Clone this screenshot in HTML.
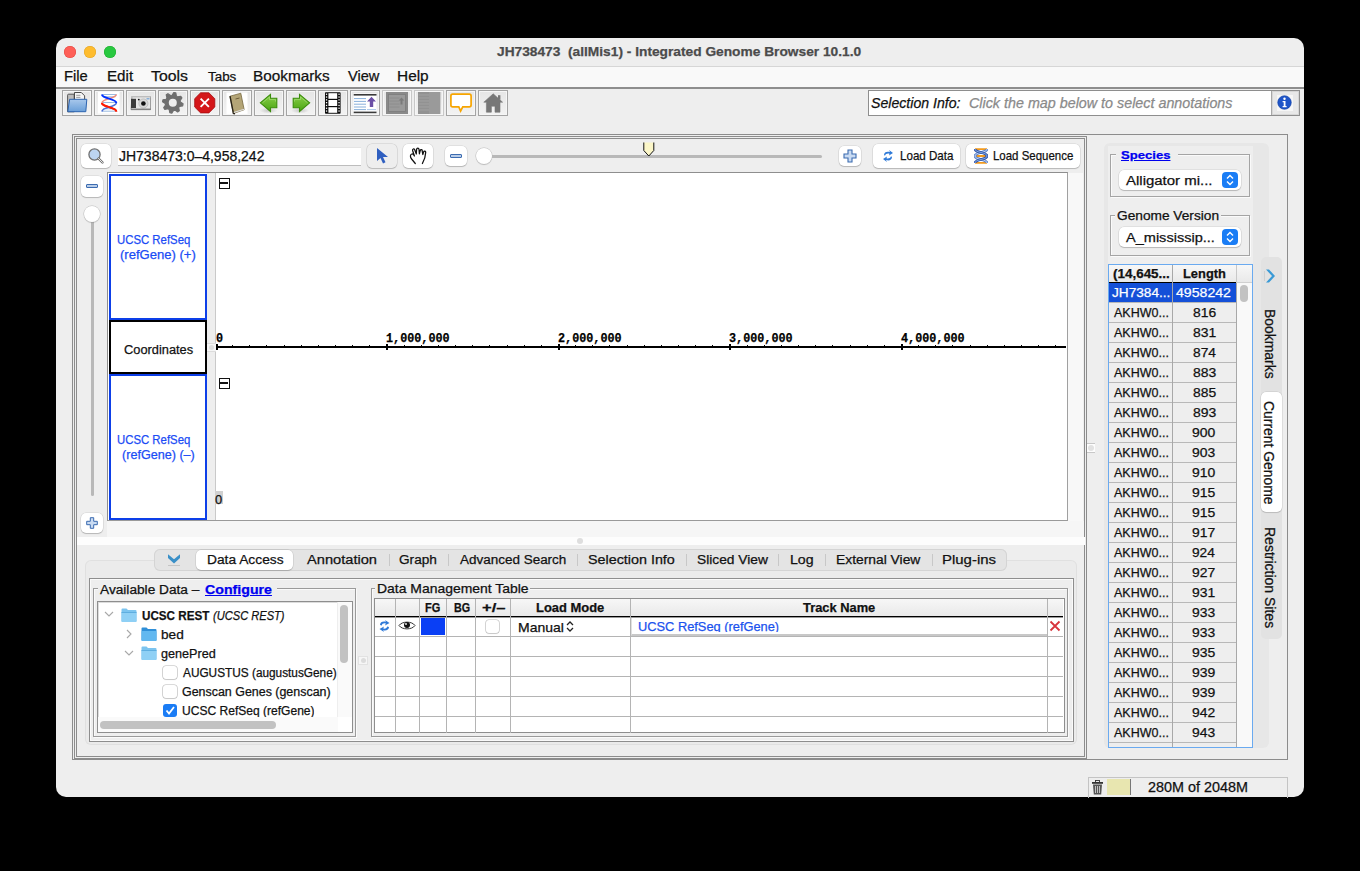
<!DOCTYPE html>
<html><head><meta charset="utf-8">
<style>
*{box-sizing:border-box;margin:0;padding:0}
html,body{width:1360px;height:871px;overflow:hidden;background:#000}
body{font-family:"Liberation Sans",sans-serif;font-size:13px;color:#000;position:relative}
.a{position:absolute}
.t{position:absolute;white-space:nowrap;line-height:1;-webkit-text-stroke:0.25px currentColor}
#win{position:absolute;left:56px;top:38px;width:1248px;height:759px;background:#eeeeee;border-radius:10px;overflow:hidden}
.dot{position:absolute;top:46px;width:12px;height:12px;border-radius:50%}
.tb{position:absolute;top:90px;width:30px;height:26px;border:1px solid #a4a4a4;background:linear-gradient(#e6e6e6,#f3f3f3);box-shadow:inset 0 0 0 1px #f6f6f6}
.tb svg{position:absolute;left:3px;top:2px}
.bx{position:absolute;border:1px solid #8c8c8c}
.btnw{position:absolute;background:#fff;border-radius:5px;box-shadow:0 0 0 0.5px rgba(0,0,0,0.12),0 1px 1px rgba(0,0,0,0.18)}
.mono{font-family:"Liberation Mono",monospace;font-weight:bold}
.blue{color:#1a52e0}
.link{color:#0000ee;text-decoration:underline;font-weight:bold}
</style></head><body>
<div id="win"></div>
<!-- title bar -->
<div class="a" style="left:56px;top:66px;width:1248px;height:1px;background:#d6d6d6"></div>
<div class="dot" style="left:64px;background:#fe5f57;box-shadow:inset 0 0 0 0.5px #e2463f"></div>
<div class="dot" style="left:84px;background:#febc2e;box-shadow:inset 0 0 0 0.5px #e1a325"></div>
<div class="dot" style="left:104px;background:#28c840;box-shadow:inset 0 0 0 0.5px #1aab29"></div>
<!-- menu bar -->
<div class="a" style="left:56px;top:67px;width:1248px;height:20px;background:#f9f9f9"></div>
<div class="a" style="left:56px;top:87px;width:1248px;height:2px;background:#8e8e8e"></div>
<!-- toolbar -->
<div class="tb" style="left:62px"></div>
<div class="tb" style="left:94px"></div>
<div class="tb" style="left:126px"></div>
<div class="tb" style="left:158px"></div>
<div class="tb" style="left:190px"></div>
<div class="tb" style="left:222px"></div>
<div class="tb" style="left:254px"></div>
<div class="tb" style="left:286px"></div>
<div class="tb" style="left:318px"></div>
<div class="tb" style="left:350px"></div>
<div class="tb" style="left:382px;border-color:#c8c8c8"></div>
<div class="tb" style="left:414px;border-color:#c8c8c8"></div>
<div class="tb" style="left:446px"></div>
<div class="tb" style="left:478px"></div>
<svg class="a" style="left:60px;top:88px" width="452" height="30" viewBox="60 88 452 30">
<defs>
<linearGradient id="gfold" x1="0" y1="0" x2="0" y2="1"><stop offset="0" stop-color="#a9c8ec"/><stop offset="1" stop-color="#6a9fd8"/></linearGradient>
<linearGradient id="garr" x1="0" y1="0" x2="0" y2="1"><stop offset="0" stop-color="#8ad04a"/><stop offset="1" stop-color="#4aa512"/></linearGradient>
<radialGradient id="gshadow"><stop offset="0" stop-color="#000" stop-opacity="0.18"/><stop offset="1" stop-color="#000" stop-opacity="0"/></radialGradient>
</defs>
<!-- open -->
<path d="M67.6 95.2a1 1 0 0 1 1-1h5.6v17.6h-6.6z" fill="#bdbdbd" stroke="#4a4a4a" stroke-width="0.9"/>
<path d="M74.5 92.5h6.8l3.3 3.3v8h-10.1z" fill="#f6f6f6" stroke="#3c3c3c" stroke-width="0.9"/>
<path d="M76.2 95.3h4.2M76.2 97.4h4.2" stroke="#888" stroke-width="0.8"/>
<path d="M69.6 99.3h17.2l-1 12.4H67.8z" fill="url(#gfold)" stroke="#2d64b0" stroke-width="1"/>
<!-- dna -->
<rect x="98" y="92" width="21.5" height="21.5" fill="#fff"/>
<path d="M102 94.5h14.5M103 96.8h12.5M102.5 102.5h13M103 108.8h12.5M102 111.2h14.5" stroke="#8fb2dc" stroke-width="0.9"/>
<path d="M116.3 94.4C116.3 98.6 102 98.6 102 102.9" fill="none" stroke="#ef8a7a" stroke-width="1.6"/>
<path d="M102 102.9C102 107.1 116.3 107.1 116.3 111.4" fill="none" stroke="#fe1a00" stroke-width="2"/>
<path d="M116.3 102.9C116.3 107.1 102 107.1 102 111.4" fill="none" stroke="#4a6fd6" stroke-width="1.6"/>
<path d="M102 94.4C102 98.6 116.3 98.6 116.3 102.9" fill="none" stroke="#0030fe" stroke-width="2"/>
<path d="M102 102.9C102 107.1 116.3 107.1 116.3 111.4" fill="none" stroke="#fe1a00" stroke-width="2"/>
<!-- camera -->
<path d="M132 96.5h18.5v13.2H131z" fill="#e6e6e6" stroke="#8a8a8a" stroke-width="0.8"/>
<rect x="131.2" y="96" width="19.5" height="1.4" fill="#bdbdbd"/>
<rect x="131" y="98.8" width="5" height="9.2" fill="#3a3a3a"/>
<circle cx="143.4" cy="103.5" r="4.6" fill="#d8d8d8" stroke="#aaa" stroke-width="0.6"/>
<circle cx="143.4" cy="103.5" r="2.3" fill="#111"/>
<circle cx="138.8" cy="99.6" r="0.9" fill="#111"/>
<rect x="146.5" y="98" width="3" height="1.5" fill="#8ab0d8"/>
<rect x="131" y="108.6" width="19.8" height="1.2" fill="#777"/>
<!-- gear -->
<path d="M172.06 95.24 L173.81 92.55 L175.79 92.94 L176.38 96.10 L177.62 96.93 L180.76 96.27 L181.88 97.94 L180.07 100.59 L180.36 102.06 L183.05 103.81 L182.66 105.79 L179.50 106.38 L178.67 107.62 L179.33 110.76 L177.66 111.88 L175.01 110.07 L173.54 110.36 L171.79 113.05 L169.81 112.66 L169.22 109.50 L167.98 108.67 L164.84 109.33 L163.72 107.66 L165.53 105.01 L165.24 103.54 L162.55 101.79 L162.94 99.81 L166.10 99.22 L166.93 97.98 L166.27 94.84 L167.94 93.72 L170.59 95.53Z" fill="#6f6f6f" stroke="#6f6f6f" stroke-width="1.2" stroke-linejoin="round"/>
<circle cx="172.8" cy="102.8" r="4" fill="#eeeeee"/>
<!-- stop -->
<path d="M200.6 92.8h8.3l5.9 5.9v8.3l-5.9 5.9h-8.3l-5.9-5.9v-8.3z" fill="#d4171a" stroke="#a40d10" stroke-width="0.8"/>
<path d="M200.6 98.6l8.3 8.3M208.9 98.6l-8.3 8.3" stroke="#fff" stroke-width="1.9"/>
<!-- book -->
<rect x="226.5" y="92.5" width="21" height="21.4" fill="#fff"/>
<path d="M230 96.2l10.8-3 3.4 16.5-10.8 3.8z" fill="#b4a577" stroke="#6a5a30" stroke-width="0.7"/>
<path d="M230 96.2l3.4 17.3l1.6 0.3" fill="none" stroke="#2a2418" stroke-width="1.4"/>
<path d="M233.8 112.5l10.4-3.2" stroke="#e0e0e0" stroke-width="1.2"/>
<path d="M235.5 99l4-1" stroke="#5a4a2a" stroke-width="0.8"/>
<!-- left arrow -->
<ellipse cx="268.5" cy="110.5" rx="9" ry="3" fill="url(#gshadow)"/>
<path d="M260.3 102.8l10.2-8.5v4h6.3v9.4h-6.3v3.8z" fill="url(#garr)" stroke="#3b8c0c" stroke-width="1.1" stroke-linejoin="miter"/>
<path d="M262.5 102.8l7-5.8v2.6h6v2" fill="none" stroke="#b8e890" stroke-width="0.7" opacity="0.7"/>
<!-- right arrow -->
<ellipse cx="300" cy="110.5" rx="9" ry="3" fill="url(#gshadow)"/>
<path d="M309.7 102.8l-10.2-8.5v4h-6.3v9.4h6.3v3.8z" fill="url(#garr)" stroke="#3b8c0c" stroke-width="1.1" stroke-linejoin="miter"/>
<path d="M307.5 102.8l-7-5.8v2.6h-6v2" fill="none" stroke="#b8e890" stroke-width="0.7" opacity="0.7"/>
<!-- film -->
<rect x="325" y="92.2" width="15.6" height="21.6" fill="#0c0c0c" rx="0.8"/>
<rect x="328.4" y="93.2" width="8.8" height="5.6" fill="#fff"/>
<rect x="328.4" y="100" width="8.8" height="6" fill="#fff"/>
<rect x="328.4" y="107.2" width="8.8" height="5.6" fill="#fff"/>
<g fill="#fff"><rect x="325.9" y="93.6" width="1.3" height="1.3"/><rect x="338.4" y="93.6" width="1.3" height="1.3"/><rect x="325.9" y="96.4" width="1.3" height="1.3"/><rect x="338.4" y="96.4" width="1.3" height="1.3"/><rect x="325.9" y="99.2" width="1.3" height="1.3"/><rect x="338.4" y="99.2" width="1.3" height="1.3"/><rect x="325.9" y="102" width="1.3" height="1.3"/><rect x="338.4" y="102" width="1.3" height="1.3"/><rect x="325.9" y="104.8" width="1.3" height="1.3"/><rect x="338.4" y="104.8" width="1.3" height="1.3"/><rect x="325.9" y="107.6" width="1.3" height="1.3"/><rect x="338.4" y="107.6" width="1.3" height="1.3"/><rect x="325.9" y="110.4" width="1.3" height="1.3"/><rect x="338.4" y="110.4" width="1.3" height="1.3"/></g>
<!-- upload list -->
<rect x="353.5" y="93.5" width="23" height="20" fill="#fff"/>
<rect x="353.7" y="94" width="22.8" height="1.6" fill="#3a3a3a"/>
<rect x="353.7" y="111.6" width="22.8" height="1.6" fill="#3a3a3a"/>
<path d="M354 98.6h12M354 101.4h12M354 104.2h12M354 107h12M354 109.6h12" stroke="#7aa6d6" stroke-width="0.9"/>
<path d="M371.5 96.8l-4.5 4.8h2.8v5.4h3.4v-5.4H376z" fill="#6b4fa6"/>
<path d="M367 109.6h9" stroke="#9ec0e6" stroke-width="0.9"/>
<!-- gray 1 -->
<rect x="386" y="92" width="22" height="22" fill="#8a8a8a"/>
<rect x="388.5" y="94.5" width="17" height="17" fill="#9a9a9a" stroke="#7c7c7c" stroke-width="0.8"/>
<path d="M389.5 98h10M389.5 101h10M389.5 104h10M389.5 107h10" stroke="#8a8a8a" stroke-width="0.8"/>
<path d="M401.5 97.5l-2.8 3h1.8v4h2v-4h1.8z" fill="#7a7a7a"/>
<!-- gray 2 -->
<rect x="418" y="92" width="22.2" height="22" fill="#929292"/>
<rect x="429" y="92" width="11.2" height="22" fill="#9a9a9a"/>
<path d="M418.5 95h10.5M418.5 98h10.5M418.5 101h10.5M418.5 104h10.5M418.5 107h10.5M418.5 110h10.5" stroke="#a6a6a6" stroke-width="0.8"/>
<!-- speech bubble -->
<path d="M452.7 94.2h16.6a1.8 1.8 0 0 1 1.8 1.8v9a1.8 1.8 0 0 1-1.8 1.8h-6.5l-2.2 4.2-1.8-4.2h-6.1a1.8 1.8 0 0 1-1.8-1.8v-9a1.8 1.8 0 0 1 1.8-1.8z" fill="#fff" stroke="#f7a500" stroke-width="1.7"/>
<!-- home -->
<path d="M493.2 93.8l-9.4 8.4h2.6v10h5v-6h3.6v6h5v-10h2.6z" fill="#777" stroke="#777" stroke-width="0.6" stroke-linejoin="round"/>
<rect x="498" y="95.2" width="2.4" height="4.5" fill="#777"/>
</svg>
<!-- selection info -->
<div class="a" style="left:868px;top:90px;width:432px;height:26px;background:#fff;border:1px solid #8e8e8e"></div>
<div class="a" style="left:1271px;top:91px;width:28px;height:24px;background:#e8e8e8;border-left:1px solid #a8a8a8;box-shadow:inset 0 0 0 1px #d6d6d6"></div>
<div class="a" style="left:1277px;top:95px;width:16px;height:16px;background:#f6f6f6"></div>
<svg class="a" style="left:1277px;top:95px" width="15" height="15" viewBox="0 0 15 15"><circle cx="7.5" cy="7.5" r="6.8" fill="#1f55c8"/><circle cx="7.5" cy="7.5" r="6.8" fill="none" stroke="#0c3aa0" stroke-width="0.6"/><circle cx="7.5" cy="3.8" r="1.2" fill="#fff"/><path d="M5.6 6h2.9v5h1.1v1.2H5.6V11h1.1V7.2H5.6z" fill="#fff"/></svg>

<!-- BODY -->
<!-- main outer borders -->
<div class="bx" style="left:72px;top:134px;width:1216px;height:626px"></div>
<div class="bx" style="left:74px;top:136px;width:1013px;height:623px"></div>
<div class="bx" style="left:76px;top:138px;width:1009px;height:619px"></div>
<!-- search toolbar -->
<div class="btnw" style="left:81px;top:144px;width:30px;height:24px"></div>
<svg class="a" style="left:87px;top:147px" width="18" height="18" viewBox="0 0 18 18"><circle cx="7.5" cy="7.5" r="5.6" fill="#bcd4f0" stroke="#707070" stroke-width="1.3"/><path d="M11.5 11.5l4 4" stroke="#707070" stroke-width="2.4" stroke-linecap="round"/><path d="M11.5 11.5l4 4" stroke="#e8e8e8" stroke-width="1" stroke-linecap="round"/></svg>
<div class="a" style="left:118px;top:147px;width:243px;height:19px;background:#fff;box-shadow:inset 0 -1px 0 #bdbdbd,inset 0 1px 0 #e4e4e4"></div>
<div class="a" style="left:367px;top:144px;width:30px;height:24px;background:#eeeeee;border-radius:5px;box-shadow:0 0 0 0.5px rgba(0,0,0,0.15),0 1px 1px rgba(0,0,0,0.15)"></div>
<svg class="a" style="left:375px;top:147px" width="14" height="18" viewBox="0 0 14 18"><path d="M2 1v13l3.5-3 2.5 5.5 2.5-1.2-2.5-5.3H13z" fill="#2f5fc0"/></svg>
<div class="btnw" style="left:403px;top:144px;width:30px;height:24px"></div>
<svg class="a" style="left:400px;top:140px" width="32" height="30" viewBox="400 140 32 30"><path d="M415.3 163.5L411.6 159C410 157 410 154.5 411.8 154C413 153.8 414 155 414.4 156L412.6 150.5C412.2 149 414 148.3 414.6 149.5L416.3 154L416.6 149.3C416.8 147.8 418.8 147.8 419 149.3L419.4 153.8L420.2 150.5C420.6 149.2 422.4 149.4 422.2 150.8L422.8 154.5L423.6 152C424 150.8 425.8 151 425.7 152.5C425.6 156 424.5 159.5 422.4 163.5" fill="#fff" stroke="#111" stroke-width="1.25" stroke-linecap="round" stroke-linejoin="round"/></svg>
<div class="btnw" style="left:445px;top:146px;width:22px;height:20px"></div>
<div class="a" style="left:450px;top:154px;width:12px;height:4px;background:#b9cde8;border:1px solid #3b6bb0;border-radius:1px"></div>
<div class="a" style="left:484px;top:155px;width:338px;height:3px;background:#b8b8b8;border-radius:2px"></div>
<div class="a" style="left:476px;top:148px;width:16px;height:16px;border-radius:50%;background:#fff;box-shadow:0 0 0 0.5px #bdbdbd,0 1px 1px rgba(0,0,0,0.2)"></div>
<svg class="a" style="left:643px;top:141.5px" width="12" height="15" viewBox="0 0 12 15"><path d="M0.8 0.5V8.5l5 5.5 5-5.5V0.5" fill="#fbf6c8" stroke="#111" stroke-width="1"/></svg>
<div class="btnw" style="left:839px;top:146px;width:22px;height:20px"></div>
<svg class="a" style="left:843px;top:149px" width="14" height="14" viewBox="0 0 14 14"><path d="M5 1h4v4h4v4H9v4H5V9H1V5h4z" fill="#c9dbf2" stroke="#3b6bb0" stroke-width="1.1"/></svg>
<div class="btnw" style="left:873px;top:144px;width:87px;height:24px"></div>
<svg class="a" style="left:881px;top:148px" width="14" height="16" viewBox="0 0 14 16"><path d="M3 7c0-3 3-4 6-3l-1-2 4 3-4 2.5 0.5-1.8c-2-0.5-4 0-4.5 2z" fill="#2f7ad8"/><path d="M11 9c0 3-3 4-6 3l1 2-4-3 4-2.5-0.5 1.8c2 0.5 4 0 4.5-2z" fill="#2f7ad8"/></svg>
<div class="btnw" style="left:966px;top:144px;width:114px;height:24px"></div>
<svg class="a" style="left:974px;top:148px" width="14" height="16" viewBox="0 0 14 16"><path d="M1 1.2h12M1 8h12M1 14.8h12" stroke="#f29a1e" stroke-width="1.8"/><path d="M13 1C13 5 1 4 1 8C1 12 13 11 13 15" stroke="#5a82cc" stroke-width="2.8" fill="none"/><path d="M13 1C13 5 1 4 1 8C1 12 13 11 13 15" stroke="#c4d4f0" stroke-width="1" fill="none"/><path d="M1 1C1 5 13 4 13 8C13 12 1 11 1 15" stroke="#2f55a8" stroke-width="2.8" fill="none"/><path d="M1 1C1 5 13 4 13 8C13 12 1 11 1 15" stroke="#8fb0e6" stroke-width="0.9" fill="none"/></svg>

<!-- track area -->
<div class="a" style="left:107px;top:172px;width:961px;height:349px;background:#fff;border-left:1px solid #8e8e8e;border-top:1px solid #8e8e8e;border-bottom:1px solid #9a9a9a;border-right:1px solid #a0a0a0"></div>
<div class="a" style="left:207px;top:173px;width:9px;height:347px;background:#eeeeee;border-right:1px solid #c9c9c9"></div>
<div class="a" style="left:109px;top:174px;width:98px;height:146px;border:2px solid #0d3fe8"></div>
<div class="a" style="left:109px;top:320px;width:98px;height:54px;border:2px solid #000"></div>
<div class="a" style="left:109px;top:374px;width:98px;height:146px;border:2px solid #0d3fe8"></div>
<div class="a" style="left:218.8px;top:178.2px;width:11.2px;height:10.8px;border:1.4px solid #111"><div class="a" style="left:0.1px;top:3.2px;width:8.2px;height:1.7px;background:#111"></div></div>
<div class="a" style="left:218.8px;top:378.2px;width:11.2px;height:10.8px;border:1.4px solid #111"><div class="a" style="left:0.1px;top:3.2px;width:8.2px;height:1.7px;background:#111"></div></div>
<!-- splitter dot in gap -->
<div class="a" style="left:207px;top:343px;width:9px;height:9px;background:#f6f6f6;border-top:1px solid #dcdcdc;border-bottom:1px solid #dcdcdc"></div>
<div class="a" style="left:209px;top:345px;width:5px;height:5px;border-radius:50%;background:#dedede"></div>
<!-- ruler -->
<div class="a" style="left:216px;top:346px;width:850px;height:2px;background:#000"></div>
<div class="a" style="left:216px;top:344px;width:2px;height:6px;background:#000"></div>
<div class="a" style="left:232px;top:345px;width:1px;height:1px;background:#000"></div>
<div class="a" style="left:249px;top:345px;width:1px;height:1px;background:#000"></div>
<div class="a" style="left:266px;top:345px;width:1px;height:1px;background:#000"></div>
<div class="a" style="left:284px;top:345px;width:1px;height:1px;background:#000"></div>
<div class="a" style="left:301px;top:345px;width:1px;height:1px;background:#000"></div>
<div class="a" style="left:318px;top:345px;width:1px;height:1px;background:#000"></div>
<div class="a" style="left:335px;top:345px;width:1px;height:1px;background:#000"></div>
<div class="a" style="left:352px;top:345px;width:1px;height:1px;background:#000"></div>
<div class="a" style="left:369px;top:345px;width:1px;height:1px;background:#000"></div>
<div class="a" style="left:386px;top:344px;width:2px;height:6px;background:#000"></div>
<div class="a" style="left:404px;top:345px;width:1px;height:1px;background:#000"></div>
<div class="a" style="left:421px;top:345px;width:1px;height:1px;background:#000"></div>
<div class="a" style="left:438px;top:345px;width:1px;height:1px;background:#000"></div>
<div class="a" style="left:455px;top:345px;width:1px;height:1px;background:#000"></div>
<div class="a" style="left:472px;top:345px;width:1px;height:1px;background:#000"></div>
<div class="a" style="left:489px;top:345px;width:1px;height:1px;background:#000"></div>
<div class="a" style="left:507px;top:345px;width:1px;height:1px;background:#000"></div>
<div class="a" style="left:524px;top:345px;width:1px;height:1px;background:#000"></div>
<div class="a" style="left:541px;top:345px;width:1px;height:1px;background:#000"></div>
<div class="a" style="left:558px;top:344px;width:2px;height:6px;background:#000"></div>
<div class="a" style="left:575px;top:345px;width:1px;height:1px;background:#000"></div>
<div class="a" style="left:592px;top:345px;width:1px;height:1px;background:#000"></div>
<div class="a" style="left:609px;top:345px;width:1px;height:1px;background:#000"></div>
<div class="a" style="left:627px;top:345px;width:1px;height:1px;background:#000"></div>
<div class="a" style="left:644px;top:345px;width:1px;height:1px;background:#000"></div>
<div class="a" style="left:661px;top:345px;width:1px;height:1px;background:#000"></div>
<div class="a" style="left:678px;top:345px;width:1px;height:1px;background:#000"></div>
<div class="a" style="left:695px;top:345px;width:1px;height:1px;background:#000"></div>
<div class="a" style="left:712px;top:345px;width:1px;height:1px;background:#000"></div>
<div class="a" style="left:729px;top:344px;width:2px;height:6px;background:#000"></div>
<div class="a" style="left:747px;top:345px;width:1px;height:1px;background:#000"></div>
<div class="a" style="left:764px;top:345px;width:1px;height:1px;background:#000"></div>
<div class="a" style="left:781px;top:345px;width:1px;height:1px;background:#000"></div>
<div class="a" style="left:798px;top:345px;width:1px;height:1px;background:#000"></div>
<div class="a" style="left:815px;top:345px;width:1px;height:1px;background:#000"></div>
<div class="a" style="left:832px;top:345px;width:1px;height:1px;background:#000"></div>
<div class="a" style="left:850px;top:345px;width:1px;height:1px;background:#000"></div>
<div class="a" style="left:867px;top:345px;width:1px;height:1px;background:#000"></div>
<div class="a" style="left:884px;top:345px;width:1px;height:1px;background:#000"></div>
<div class="a" style="left:901px;top:344px;width:2px;height:6px;background:#000"></div>
<div class="a" style="left:918px;top:345px;width:1px;height:1px;background:#000"></div>
<div class="a" style="left:935px;top:345px;width:1px;height:1px;background:#000"></div>
<div class="a" style="left:952px;top:345px;width:1px;height:1px;background:#000"></div>
<div class="a" style="left:970px;top:345px;width:1px;height:1px;background:#000"></div>
<div class="a" style="left:987px;top:345px;width:1px;height:1px;background:#000"></div>
<div class="a" style="left:1004px;top:345px;width:1px;height:1px;background:#000"></div>
<div class="a" style="left:1021px;top:345px;width:1px;height:1px;background:#000"></div>
<div class="a" style="left:1038px;top:345px;width:1px;height:1px;background:#000"></div>
<div class="a" style="left:1055px;top:345px;width:1px;height:1px;background:#000"></div>


<div class="t mono" style="left:215.8px;top:331.9px;font-size:13.5px;transform:scaleX(0.872);transform-origin:0 0">0</div>
<div class="t mono" style="left:385.8px;top:331.9px;font-size:13.5px;transform:scaleX(0.872);transform-origin:0 0">1,000,000</div>
<div class="t mono" style="left:557.8px;top:331.9px;font-size:13.5px;transform:scaleX(0.872);transform-origin:0 0">2,000,000</div>
<div class="t mono" style="left:728.8px;top:331.9px;font-size:13.5px;transform:scaleX(0.872);transform-origin:0 0">3,000,000</div>
<div class="t mono" style="left:901.3px;top:331.9px;font-size:13.5px;transform:scaleX(0.872);transform-origin:0 0">4,000,000</div>
<div class="a" style="left:215px;top:491px;width:8px;height:12.5px;background:#d0d0d0"></div>
<!-- right strip of track area -->
<div class="a" style="left:1068px;top:173px;width:15px;height:348px;background:#f8f8f8"></div>
<!-- under track area -->
<div class="a" style="left:107px;top:521px;width:977px;height:16px;background:#f6f6f6"></div>
<div class="a" style="left:77px;top:537px;width:1008px;height:8px;background:#fdfdfd"></div>
<div class="a" style="left:577px;top:538px;width:6px;height:6px;border-radius:50%;background:#dedede"></div>
<!-- vertical zoom -->
<div class="btnw" style="left:81px;top:176px;width:22px;height:21px"></div>
<div class="a" style="left:86px;top:184px;width:12px;height:4px;background:#b9cde8;border:1px solid #3b6bb0;border-radius:1px"></div>
<div class="a" style="left:91px;top:214px;width:3px;height:282px;background:#b8b8b8;border-radius:2px"></div>
<div class="a" style="left:84px;top:206px;width:16px;height:16px;border-radius:50%;background:#fff;box-shadow:0 0 0 0.5px #bdbdbd,0 1px 1px rgba(0,0,0,0.2)"></div>
<div class="btnw" style="left:81px;top:513px;width:22px;height:20px"></div>
<svg class="a" style="left:86px;top:517px" width="12" height="12" viewBox="0 0 12 12"><path d="M4.3 0.7h3.4v3.6h3.6v3.4H7.7v3.6H4.3V7.7H0.7V4.3h3.6z" fill="#c9dbf2" stroke="#3b6bb0" stroke-width="1"/></svg>
<!-- splitter dot between main and right panel -->
<div class="a" style="left:1087px;top:443px;width:8px;height:10px;background:#fdfdfd;border-top:1px solid #c8c8c8;border-bottom:1px solid #c8c8c8"></div>
<div class="a" style="left:1088px;top:445px;width:6px;height:6px;border-radius:50%;background:#e2e2e2"></div>

<!-- BOTTOM -->
<!-- tab content panel -->
<div class="a" style="left:86px;top:561px;width:990px;height:183px;background:#ebebeb;border-radius:5px;box-shadow:0 0 0 1px #e0e0e0"></div>
<div class="a" style="left:89px;top:578px;width:985px;height:164px;border:1px solid #8e8e8e;background:#eeeeee;box-shadow:inset 0 0 0 1px #fafafa"></div>
<!-- tab bar -->
<div class="a" style="left:154px;top:549px;width:853px;height:22px;background:#e4e4e4;border-radius:6px;box-shadow:inset 0 0 0 1px #d4d4d4"></div>
<svg class="a" style="left:167px;top:553px" width="14" height="14" viewBox="0 0 14 14"><path d="M1 1.2l6 5 6-5v3.8l-6 5.6-6-5.6z" fill="#3a90c8"/><rect x="1" y="12" width="12" height="1" fill="#c4c4c4"/></svg>
<div class="a" style="left:196px;top:550px;width:97px;height:20px;background:#fff;border-radius:5px;box-shadow:0 0 0 0.5px rgba(0,0,0,0.12),0 1px 1px rgba(0,0,0,0.15)"></div>
<div class="a" style="left:389px;top:554px;width:1px;height:12px;background:#c8c8c8"></div>
<div class="a" style="left:448px;top:554px;width:1px;height:12px;background:#c8c8c8"></div>
<div class="a" style="left:577px;top:554px;width:1px;height:12px;background:#c8c8c8"></div>
<div class="a" style="left:686px;top:554px;width:1px;height:12px;background:#c8c8c8"></div>
<div class="a" style="left:778px;top:554px;width:1px;height:12px;background:#c8c8c8"></div>
<div class="a" style="left:825px;top:554px;width:1px;height:12px;background:#c8c8c8"></div>
<div class="a" style="left:932px;top:554px;width:1px;height:12px;background:#c8c8c8"></div>

<!-- Available data group -->
<div class="a" style="left:93px;top:588px;width:263px;height:149px;border:1px solid #9a9a9a;box-shadow:inset 1px 1px 0 #fafafa,1px 1px 0 #fafafa"></div>
<div class="a" style="left:98px;top:582px;width:179px;height:12px;background:#eeeeee"></div>
<div class="a" style="left:97px;top:601px;width:256px;height:132px;border:1px solid #8e8e8e;background:#fff;box-shadow:inset 1px 1px 0 #dcdcdc"></div>
<!-- tree -->
<svg class="a" style="left:104px;top:610px" width="10" height="8" viewBox="0 0 10 8"><path d="M1 2l4 4 4-4" fill="none" stroke="#a8a8a8" stroke-width="1.1"/></svg>
<svg class="a" style="left:121px;top:608px" width="16" height="14" viewBox="0 0 16 14"><path d="M0.5 1.5a1 1 0 0 1 1-1h4l1.5 1.5h7.5a1 1 0 0 1 1 1V13a1 1 0 0 1-1 1h-13a1 1 0 0 1-1-1z" fill="#7cc4ef"/><rect x="0.5" y="4" width="15" height="10" rx="1" fill="#8fd0f5"/><rect x="0.5" y="4" width="15" height="1" fill="#5eaee0"/></svg>
<svg class="a" style="left:125px;top:629px" width="8" height="10" viewBox="0 0 8 10"><path d="M2 1l4 4-4 4" fill="none" stroke="#a8a8a8" stroke-width="1.1"/></svg>
<svg class="a" style="left:141px;top:627px" width="16" height="14" viewBox="0 0 16 14"><path d="M0.5 1.5a1 1 0 0 1 1-1h4l1.5 1.5h7.5a1 1 0 0 1 1 1V13a1 1 0 0 1-1 1h-13a1 1 0 0 1-1-1z" fill="#2f8fd8"/><rect x="0.5" y="4" width="15" height="10" rx="1" fill="#62b8f0"/></svg>
<svg class="a" style="left:124px;top:649px" width="10" height="8" viewBox="0 0 10 8"><path d="M1 2l4 4 4-4" fill="none" stroke="#a8a8a8" stroke-width="1.1"/></svg>
<svg class="a" style="left:141px;top:646px" width="16" height="14" viewBox="0 0 16 14"><path d="M0.5 1.5a1 1 0 0 1 1-1h4l1.5 1.5h7.5a1 1 0 0 1 1 1V13a1 1 0 0 1-1 1h-13a1 1 0 0 1-1-1z" fill="#7cc4ef"/><rect x="0.5" y="4" width="15" height="10" rx="1" fill="#8fd0f5"/><rect x="0.5" y="4" width="15" height="1" fill="#5eaee0"/></svg>
<div class="a" style="left:163px;top:666px;width:14px;height:13px;border-radius:3px;background:#fff;box-shadow:0 0 0 0.6px #b8b8b8,0 0.5px 1px rgba(0,0,0,0.15)"></div>
<div class="a" style="left:163px;top:685px;width:14px;height:13px;border-radius:3px;background:#fff;box-shadow:0 0 0 0.6px #b8b8b8,0 0.5px 1px rgba(0,0,0,0.15)"></div>
<div class="a" style="left:163px;top:704px;width:14px;height:13px;border-radius:3px;background:#1a7cf5"></div>
<svg class="a" style="left:164px;top:705px" width="12" height="11" viewBox="0 0 12 11"><path d="M2.5 5.5l2.5 3 5-6.5" fill="none" stroke="#fff" stroke-width="1.8"/></svg>
<!-- tree scrollbars -->
<div class="a" style="left:98px;top:717px;width:240px;height:15px;background:#fafafa"></div>
<div class="a" style="left:100px;top:721px;width:176px;height:8px;border-radius:4px;background:#c2c2c2"></div>
<div class="a" style="left:337px;top:602px;width:15px;height:115px;background:#fafafa;border-left:1px solid #eeeeee"></div>
<div class="a" style="left:340px;top:605px;width:8px;height:58px;border-radius:4px;background:#c2c2c2"></div>
<div class="a" style="left:338px;top:717px;width:14px;height:15px;background:#fff"></div>
<!-- splitter dot bottom -->
<div class="a" style="left:358px;top:656px;width:10px;height:9px;background:#f6f6f6;border:1px solid #e2e2e2"></div>
<div class="a" style="left:361px;top:658px;width:5px;height:5px;border-radius:50%;background:#dcdcdc"></div>

<!-- Data management group -->
<div class="a" style="left:371px;top:588px;width:697px;height:149px;border:1px solid #9a9a9a;box-shadow:inset 1px 1px 0 #fafafa,1px 1px 0 #fafafa"></div>
<div class="a" style="left:375px;top:582px;width:155px;height:12px;background:#eeeeee"></div>
<div class="a" style="left:374px;top:598px;width:691px;height:135px;border:1px solid #8e8e8e;background:#fff"></div>
<div class="a" style="left:375px;top:599px;width:688px;height:17px;background:linear-gradient(#f7f7f7,#e9e9e9)"></div>
<div class="a" style="left:375px;top:616px;width:688px;height:1px;background:#000"></div><div class="a" style="left:375px;top:617px;width:688px;height:1px;background:#9a9a9a"></div>
<div class="a" style="left:395px;top:599px;width:1px;height:134px;background:#b4b4b4"></div>
<div class="a" style="left:419px;top:599px;width:1px;height:134px;background:#b4b4b4"></div>
<div class="a" style="left:446px;top:599px;width:1px;height:134px;background:#b4b4b4"></div>
<div class="a" style="left:475px;top:599px;width:1px;height:134px;background:#b4b4b4"></div>
<div class="a" style="left:510px;top:599px;width:1px;height:134px;background:#b4b4b4"></div>
<div class="a" style="left:630px;top:599px;width:1px;height:134px;background:#b4b4b4"></div>
<div class="a" style="left:1047px;top:599px;width:1px;height:134px;background:#b4b4b4"></div>
<div class="a" style="left:375px;top:636px;width:688px;height:1px;background:#b4b4b4"></div>
<div class="a" style="left:375px;top:656px;width:688px;height:1px;background:#b4b4b4"></div>
<div class="a" style="left:375px;top:676px;width:688px;height:1px;background:#b4b4b4"></div>
<div class="a" style="left:375px;top:696px;width:688px;height:1px;background:#b4b4b4"></div>
<div class="a" style="left:375px;top:716px;width:688px;height:1px;background:#b4b4b4"></div>

<svg class="a" style="left:378px;top:619px" width="13" height="14" viewBox="0 0 13 14"><path d="M2 6c0-3 3-4 6-3.2L7 1l4.5 3L7 6.5l0.8-2C5.5 4 4 5 3.8 6.5z" fill="#2f7ad8"/><path d="M11 8c0 3-3 4-6 3.2L6 13l-4.5-3L6 7.5l-0.8 2C7.5 10 9 9 9.2 7.5z" fill="#2f7ad8"/></svg>
<svg class="a" style="left:398px;top:620px" width="18" height="11" viewBox="0 0 18 11"><path d="M1 5.5C4 1 14 1 17 5.5C14 10 4 10 1 5.5z" fill="#fff" stroke="#333" stroke-width="1"/><circle cx="9" cy="5" r="3" fill="#111"/><circle cx="8" cy="4" r="0.9" fill="#fff"/></svg>
<div class="a" style="left:421px;top:618px;width:24px;height:17px;background:#0a3ff5"></div>
<div class="a" style="left:486px;top:620px;width:13px;height:13px;border-radius:3px;background:#fff;box-shadow:0 0 0 0.6px #b8b8b8,0 0.5px 1px rgba(0,0,0,0.15)"></div>
<svg class="a" style="left:566px;top:620px" width="8" height="13" viewBox="0 0 8 13"><path d="M1 5l3-3 3 3M1 8l3 3 3-3" fill="none" stroke="#222" stroke-width="1.3"/></svg>
<div class="a" style="left:631px;top:618px;width:416px;height:18px;background:#fff;border-bottom:2px solid #c8c8c8;border-left:1px solid #e0e0e0"></div>
<svg class="a" style="left:1049px;top:620px" width="12" height="12" viewBox="0 0 12 12"><path d="M1.5 1.5l9 9M10.5 1.5l-9 9" stroke="#d8343c" stroke-width="1.8"/></svg>

<!-- RIGHT -->
<!-- right panel -->
<div class="a" style="left:1104px;top:143px;width:165px;height:605px;background:#e7e7e7;border-radius:6px"></div>
<div class="a" style="left:1108px;top:146px;width:145px;height:601px;background:#eeeeee"></div>
<!-- species -->
<div class="a" style="left:1110px;top:154px;width:140px;height:43px;border:1px solid #a4a4a4;box-shadow:inset 1px 1px 0 #fafafa,1px 1px 0 #fafafa"></div>
<div class="a" style="left:1116px;top:149px;width:62px;height:12px;background:#eeeeee"></div>
<div class="btnw" style="left:1119px;top:170px;width:122px;height:20px"></div>
<div class="a" style="left:1222px;top:172px;width:16px;height:16px;border-radius:4px;background:#1a7df5"></div>
<svg class="a" style="left:1222px;top:172px" width="16" height="16" viewBox="0 0 16 16"><path d="M5 6.5l3-3 3 3M5 9.5l3 3 3-3" fill="none" stroke="#fff" stroke-width="1.4"/></svg>
<!-- genome version -->
<div class="a" style="left:1110px;top:215px;width:140px;height:41px;border:1px solid #a4a4a4;box-shadow:inset 1px 1px 0 #fafafa,1px 1px 0 #fafafa"></div>
<div class="a" style="left:1115px;top:208px;width:106px;height:12px;background:#eeeeee"></div>
<div class="btnw" style="left:1119px;top:227px;width:122px;height:20px"></div>
<div class="a" style="left:1222px;top:229px;width:16px;height:16px;border-radius:4px;background:#1a7df5"></div>
<svg class="a" style="left:1222px;top:229px" width="16" height="16" viewBox="0 0 16 16"><path d="M5 6.5l3-3 3 3M5 9.5l3 3 3-3" fill="none" stroke="#fff" stroke-width="1.4"/></svg>
<!-- chromosome table -->
<div class="a" style="left:1108px;top:264px;width:145px;height:484px;border:1px solid #6aaaf0;background:#f9f9f9"></div>
<div class="a" style="left:1109px;top:265px;width:127px;height:482px;background:#eeeeee"></div>
<div class="a" style="left:1109px;top:265px;width:143px;height:17px;background:linear-gradient(#f7f7f7,#e9e9e9)"></div>
<div class="a" style="left:1109px;top:282px;width:127px;height:1px;background:#000"></div>
<div class="a" style="left:1236px;top:282px;width:16px;height:1px;background:#d0d0d0"></div>
<div class="a" style="left:1236px;top:265px;width:1px;height:17px;background:#c8c8c8"></div>
<div class="a" style="left:1109px;top:283px;width:127px;height:19px;background:#1450d8"></div>
<div class="a" style="left:1109px;top:302px;width:127px;height:1px;background:#b8b8b8"></div>
<div class="a" style="left:1109px;top:322px;width:127px;height:1px;background:#b8b8b8"></div>
<div class="a" style="left:1109px;top:342px;width:127px;height:1px;background:#b8b8b8"></div>
<div class="a" style="left:1109px;top:362px;width:127px;height:1px;background:#b8b8b8"></div>
<div class="a" style="left:1109px;top:382px;width:127px;height:1px;background:#b8b8b8"></div>
<div class="a" style="left:1109px;top:402px;width:127px;height:1px;background:#b8b8b8"></div>
<div class="a" style="left:1109px;top:422px;width:127px;height:1px;background:#b8b8b8"></div>
<div class="a" style="left:1109px;top:442px;width:127px;height:1px;background:#b8b8b8"></div>
<div class="a" style="left:1109px;top:462px;width:127px;height:1px;background:#b8b8b8"></div>
<div class="a" style="left:1109px;top:482px;width:127px;height:1px;background:#b8b8b8"></div>
<div class="a" style="left:1109px;top:502px;width:127px;height:1px;background:#b8b8b8"></div>
<div class="a" style="left:1109px;top:522px;width:127px;height:1px;background:#b8b8b8"></div>
<div class="a" style="left:1109px;top:542px;width:127px;height:1px;background:#b8b8b8"></div>
<div class="a" style="left:1109px;top:562px;width:127px;height:1px;background:#b8b8b8"></div>
<div class="a" style="left:1109px;top:582px;width:127px;height:1px;background:#b8b8b8"></div>
<div class="a" style="left:1109px;top:602px;width:127px;height:1px;background:#b8b8b8"></div>
<div class="a" style="left:1109px;top:622px;width:127px;height:1px;background:#b8b8b8"></div>
<div class="a" style="left:1109px;top:642px;width:127px;height:1px;background:#b8b8b8"></div>
<div class="a" style="left:1109px;top:662px;width:127px;height:1px;background:#b8b8b8"></div>
<div class="a" style="left:1109px;top:682px;width:127px;height:1px;background:#b8b8b8"></div>
<div class="a" style="left:1109px;top:702px;width:127px;height:1px;background:#b8b8b8"></div>
<div class="a" style="left:1109px;top:722px;width:127px;height:1px;background:#b8b8b8"></div>
<div class="a" style="left:1109px;top:742px;width:127px;height:1px;background:#b8b8b8"></div>

<div class="a" style="left:1172px;top:265px;width:1px;height:482px;background:#a8a8a8"></div>
<div class="a" style="left:1236px;top:283px;width:1px;height:464px;background:#a8a8a8"></div>
<div class="a" style="left:1240px;top:285px;width:8px;height:17px;border-radius:4px;background:#c2c2c2"></div>
<!-- vertical tabs -->
<div class="a" style="left:1261px;top:257px;width:21px;height:382px;background:#e2e2e2;border-radius:5px"></div>
<svg class="a" style="left:1264px;top:269px" width="12" height="14" viewBox="0 0 12 14"><path d="M2 0.5l6 6.5-6 6.5h3l6-6.5-6-6.5z" fill="#3a9ad6"/><rect x="0" y="2" width="1" height="10" fill="#cfcfcf"/></svg>
<div class="a" style="left:1261px;top:392px;width:21px;height:120px;background:#fff;border-radius:5px;box-shadow:0 0 0 0.5px rgba(0,0,0,0.12),0 1px 1px rgba(0,0,0,0.12)"></div>
<!-- status bar -->
<div class="a" style="left:1088px;top:777px;width:200px;height:21px;border:1px solid #c4c4c4;border-bottom:none"></div>
<svg class="a" style="left:1091px;top:780px" width="13" height="15" viewBox="0 0 13 15"><rect x="1" y="2" width="11" height="1.8" fill="#333"/><rect x="4.5" y="0.5" width="4" height="2" fill="none" stroke="#333" stroke-width="0.9"/><path d="M2 4.5h9l-0.8 10H2.8z" fill="#555"/><path d="M4.5 6v7M6.5 6v7M8.5 6v7" stroke="#ddd" stroke-width="0.8"/></svg>
<div class="a" style="left:1107px;top:779px;width:24px;height:16px;background:#e8e6b0;border-right:1px solid #777"></div>


<div class="t tx0" style="left:497.30px;top:44.71px;font-size:13.52px;font-weight:bold;color:#4b4b4b;transform:scaleX(1.0162);transform-origin:0 0">JH738473&nbsp; (allMis1) - Integrated Genome Browser 10.1.0</div>
<div class="t tx1" style="left:64.20px;top:68.28px;font-size:15.26px;color:#111;transform:scaleX(0.9678);transform-origin:0 0">File</div>
<div class="t tx2" style="left:106.77px;top:68.28px;font-size:15.26px;color:#111;transform:scaleX(0.9925);transform-origin:0 0">Edit</div>
<div class="t tx3" style="left:150.94px;top:68.28px;font-size:15.26px;color:#111;transform:scaleX(1.0381);transform-origin:0 0">Tools</div>
<div class="t tx4" style="left:252.86px;top:68.28px;font-size:15.26px;color:#111;transform:scaleX(1.0043);transform-origin:0 0">Bookmarks</div>
<div class="t tx5" style="left:347.55px;top:68.28px;font-size:15.26px;color:#111;transform:scaleX(0.9579);transform-origin:0 0">View</div>
<div class="t tx6" style="left:397.48px;top:68.28px;font-size:15.26px;color:#111;transform:scaleX(1.0102);transform-origin:0 0">Help</div>
<div class="t tx7" style="left:207.59px;top:70.28px;font-size:13.08px;color:#111;transform:scaleX(1.0231);transform-origin:0 0">Tabs</div>
<div class="t tx8" style="left:871.01px;top:96.07px;font-size:14.39px;font-style:italic;color:#111;transform:scaleX(0.9828);transform-origin:0 0">Selection Info:</div>
<div class="t tx9" style="left:969.49px;top:96.07px;font-size:14.39px;font-style:italic;color:#8a8a8a;transform:scaleX(0.9962);transform-origin:0 0">Click the map below to select annotations</div>
<div class="t tx10" style="left:119.44px;top:149.15px;font-size:14.53px;color:#111;transform:scaleX(0.9635);transform-origin:0 0">JH738473:0–4,958,242</div>
<div class="t tx11" style="left:899.65px;top:149.80px;font-size:12.94px;color:#111;transform:scaleX(0.8947);transform-origin:0 0">Load Data</div>
<div class="t tx12" style="left:992.55px;top:149.80px;font-size:12.94px;color:#111;transform:scaleX(0.8857);transform-origin:0 0">Load Sequence</div>
<div class="t tx13" style="left:116.60px;top:233.61px;font-size:12.86px;color:#1a4cf5;transform:scaleX(0.8838);transform-origin:0 0">UCSC RefSeq</div>
<div class="t tx14" style="left:119.54px;top:248.72px;font-size:12.79px;color:#1a4cf5;transform:scaleX(1.0211);transform-origin:0 0">(refGene) (+)</div>
<div class="t tx15" style="left:124.20px;top:343.11px;font-size:13.52px;color:#111;transform:scaleX(0.9486);transform-origin:0 0">Coordinates</div>
<div class="t tx16" style="left:116.60px;top:433.61px;font-size:12.86px;color:#1a4cf5;transform:scaleX(0.8838);transform-origin:0 0">UCSC RefSeq</div>
<div class="t tx17" style="left:122.37px;top:448.72px;font-size:12.79px;color:#1a4cf5;transform:scaleX(0.9857);transform-origin:0 0">(refGene) (–)</div>
<div class="t tx18" style="left:214.82px;top:493.60px;font-size:12.94px;color:#111;transform:scaleX(0.9995);transform-origin:0 0">0</div>
<div class="t tx19" style="left:206.72px;top:552.61px;font-size:13.52px;color:#111;transform:scaleX(1.0196);transform-origin:0 0">Data Access</div>
<div class="t tx20" style="left:307.09px;top:552.61px;font-size:13.52px;color:#111;transform:scaleX(1.0828);transform-origin:0 0">Annotation</div>
<div class="t tx21" style="left:399.07px;top:552.61px;font-size:13.52px;color:#111;transform:scaleX(1.0090);transform-origin:0 0">Graph</div>
<div class="t tx22" style="left:459.50px;top:552.61px;font-size:13.52px;color:#111;transform:scaleX(0.9966);transform-origin:0 0">Advanced Search</div>
<div class="t tx23" style="left:587.62px;top:552.61px;font-size:13.52px;color:#111;transform:scaleX(1.0601);transform-origin:0 0">Selection Info</div>
<div class="t tx24" style="left:696.93px;top:552.61px;font-size:13.52px;color:#111;transform:scaleX(1.0191);transform-origin:0 0">Sliced View</div>
<div class="t tx25" style="left:790.45px;top:552.61px;font-size:13.52px;color:#111;transform:scaleX(1.0472);transform-origin:0 0">Log</div>
<div class="t tx26" style="left:835.83px;top:552.61px;font-size:13.52px;color:#111;transform:scaleX(1.0236);transform-origin:0 0">External View</div>
<div class="t tx27" style="left:942.38px;top:552.61px;font-size:13.52px;color:#111;transform:scaleX(1.1070);transform-origin:0 0">Plug-ins</div>
<div class="t tx28" style="left:100.47px;top:583.55px;font-size:12.65px;color:#111;transform:scaleX(1.0820);transform-origin:0 0">Available Data –</div>
<div class="t tx29" style="left:205.00px;top:583.55px;font-size:12.65px;color:#0000ee;text-decoration:underline;font-weight:bold;transform:scaleX(1.1216);transform-origin:0 0">Configure</div>
<div class="t tx30" style="left:141.68px;top:609.55px;font-size:12.94px;font-weight:bold;color:#111;transform:scaleX(0.9013);transform-origin:0 0">UCSC REST</div>
<div class="t tx31" style="left:213.43px;top:609.55px;font-size:12.94px;font-style:italic;color:#111;transform:scaleX(0.8582);transform-origin:0 0">(UCSC REST)</div>
<div class="t tx32" style="left:160.67px;top:628.60px;font-size:12.94px;color:#111;transform:scaleX(1.0528);transform-origin:0 0">bed</div>
<div class="t tx33" style="left:161.35px;top:647.60px;font-size:12.94px;color:#111;transform:scaleX(0.9752);transform-origin:0 0">genePred</div>
<div class="t tx34" style="left:183.43px;top:666.61px;font-size:12.21px;color:#111;transform:scaleX(0.9685);transform-origin:0 0">AUGUSTUS (augustusGene)</div>
<div class="t tx35" style="left:182.44px;top:685.51px;font-size:12.21px;color:#111;transform:scaleX(1.0189);transform-origin:0 0">Genscan Genes (genscan)</div>
<div class="t tx36" style="left:182.12px;top:704.51px;font-size:12.21px;color:#111;overflow:hidden;height:12.49px;transform:scaleX(0.9873);transform-origin:0 0">UCSC RefSeq (refGene)</div>
<div class="t tx37" style="left:376.62px;top:582.57px;font-size:12.79px;color:#111;transform:scaleX(1.0900);transform-origin:0 0">Data Management Table</div>
<div class="t tx38" style="left:425.14px;top:601.52px;font-size:12.79px;font-weight:bold;color:#111;transform:scaleX(0.8614);transform-origin:0 0">FG</div>
<div class="t tx39" style="left:453.50px;top:601.52px;font-size:12.79px;font-weight:bold;color:#111;transform:scaleX(0.8421);transform-origin:0 0">BG</div>
<div class="t tx40" style="left:481.55px;top:601.52px;font-size:12.79px;font-weight:bold;color:#111;transform:scaleX(1.3006);transform-origin:0 0">+/–</div>
<div class="t tx41" style="left:536.26px;top:601.89px;font-size:12.35px;font-weight:bold;color:#111;transform:scaleX(1.0486);transform-origin:0 0">Load Mode</div>
<div class="t tx42" style="left:803.34px;top:601.57px;font-size:12.50px;font-weight:bold;color:#111;transform:scaleX(1.0296);transform-origin:0 0">Track Name</div>
<div class="t tx43" style="left:518.08px;top:621.62px;font-size:12.79px;color:#111;transform:scaleX(1.0938);transform-origin:0 0">Manual</div>
<div class="t tx44" style="left:637.91px;top:620.80px;font-size:12.94px;color:#1a52ee;overflow:hidden;height:11.70px;transform:scaleX(0.9914);transform-origin:0 0">UCSC RefSeq (refGene)</div>
<div class="t tx45" style="left:1120.94px;top:149.41px;font-size:11.63px;color:#0000ee;text-decoration:underline;font-weight:bold;transform:scaleX(1.1254);transform-origin:0 0">Species</div>
<div class="t tx46" style="left:1126.39px;top:174.25px;font-size:13.23px;color:#111;transform:scaleX(1.1324);transform-origin:0 0">Alligator mi...</div>
<div class="t tx47" style="left:1117.18px;top:209.70px;font-size:12.94px;color:#111;transform:scaleX(1.0592);transform-origin:0 0">Genome Version</div>
<div class="t tx48" style="left:1126.44px;top:231.05px;font-size:13.23px;color:#111;transform:scaleX(1.0996);transform-origin:0 0">A_mississip...</div>
<div class="t tx49" style="left:1113.03px;top:267.35px;font-size:13.23px;font-weight:bold;color:#111;transform:scaleX(1.0166);transform-origin:0 0">(14,645...</div>
<div class="t tx50" style="left:1182.91px;top:267.35px;font-size:13.23px;font-weight:bold;color:#111;transform:scaleX(0.9736);transform-origin:0 0">Length</div>
<div class="t tx51" style="left:1111.97px;top:286.05px;font-size:13.23px;color:#fff;transform:scaleX(1.0321);transform-origin:0 0">JH7384...</div>
<div class="t tx52" style="left:1176.48px;top:286.05px;font-size:13.23px;color:#fff;transform:scaleX(1.0671);transform-origin:0 0">4958242</div>
<div class="t tx53" style="left:1113.71px;top:305.98px;font-size:13.08px;color:#111;transform:scaleX(0.9559);transform-origin:0 0">AKHW0...</div>
<div class="t tx54" style="left:1192.55px;top:305.98px;font-size:13.08px;color:#111;transform:scaleX(1.0606);transform-origin:0 0">816</div>
<div class="t tx55" style="left:1113.71px;top:325.98px;font-size:13.08px;color:#111;transform:scaleX(0.9559);transform-origin:0 0">AKHW0...</div>
<div class="t tx56" style="left:1192.56px;top:325.98px;font-size:13.08px;color:#111;transform:scaleX(1.0655);transform-origin:0 0">831</div>
<div class="t tx57" style="left:1113.71px;top:345.98px;font-size:13.08px;color:#111;transform:scaleX(0.9559);transform-origin:0 0">AKHW0...</div>
<div class="t tx58" style="left:1192.50px;top:345.98px;font-size:13.08px;color:#111;transform:scaleX(1.0494);transform-origin:0 0">874</div>
<div class="t tx59" style="left:1113.71px;top:365.98px;font-size:13.08px;color:#111;transform:scaleX(0.9559);transform-origin:0 0">AKHW0...</div>
<div class="t tx60" style="left:1192.54px;top:365.98px;font-size:13.08px;color:#111;transform:scaleX(1.0677);transform-origin:0 0">883</div>
<div class="t tx61" style="left:1113.71px;top:385.98px;font-size:13.08px;color:#111;transform:scaleX(0.9559);transform-origin:0 0">AKHW0...</div>
<div class="t tx62" style="left:1192.55px;top:385.98px;font-size:13.08px;color:#111;transform:scaleX(1.0619);transform-origin:0 0">885</div>
<div class="t tx63" style="left:1113.71px;top:405.98px;font-size:13.08px;color:#111;transform:scaleX(0.9559);transform-origin:0 0">AKHW0...</div>
<div class="t tx64" style="left:1192.54px;top:405.98px;font-size:13.08px;color:#111;transform:scaleX(1.0677);transform-origin:0 0">893</div>
<div class="t tx65" style="left:1113.71px;top:425.98px;font-size:13.08px;color:#111;transform:scaleX(0.9559);transform-origin:0 0">AKHW0...</div>
<div class="t tx66" style="left:1192.16px;top:425.98px;font-size:13.08px;color:#111;transform:scaleX(1.0655);transform-origin:0 0">900</div>
<div class="t tx67" style="left:1113.71px;top:445.98px;font-size:13.08px;color:#111;transform:scaleX(0.9559);transform-origin:0 0">AKHW0...</div>
<div class="t tx68" style="left:1192.18px;top:445.98px;font-size:13.08px;color:#111;transform:scaleX(1.0614);transform-origin:0 0">903</div>
<div class="t tx69" style="left:1113.71px;top:465.98px;font-size:13.08px;color:#111;transform:scaleX(0.9559);transform-origin:0 0">AKHW0...</div>
<div class="t tx70" style="left:1192.16px;top:465.98px;font-size:13.08px;color:#111;transform:scaleX(1.0655);transform-origin:0 0">910</div>
<div class="t tx71" style="left:1113.71px;top:485.98px;font-size:13.08px;color:#111;transform:scaleX(0.9559);transform-origin:0 0">AKHW0...</div>
<div class="t tx72" style="left:1192.18px;top:485.98px;font-size:13.08px;color:#111;transform:scaleX(1.0676);transform-origin:0 0">915</div>
<div class="t tx73" style="left:1113.71px;top:505.98px;font-size:13.08px;color:#111;transform:scaleX(0.9559);transform-origin:0 0">AKHW0...</div>
<div class="t tx74" style="left:1192.18px;top:505.98px;font-size:13.08px;color:#111;transform:scaleX(1.0676);transform-origin:0 0">915</div>
<div class="t tx75" style="left:1113.71px;top:525.98px;font-size:13.08px;color:#111;transform:scaleX(0.9559);transform-origin:0 0">AKHW0...</div>
<div class="t tx76" style="left:1192.20px;top:525.98px;font-size:13.08px;color:#111;transform:scaleX(1.0613);transform-origin:0 0">917</div>
<div class="t tx77" style="left:1113.71px;top:545.98px;font-size:13.08px;color:#111;transform:scaleX(0.9559);transform-origin:0 0">AKHW0...</div>
<div class="t tx78" style="left:1192.18px;top:545.98px;font-size:13.08px;color:#111;transform:scaleX(1.0480);transform-origin:0 0">924</div>
<div class="t tx79" style="left:1113.71px;top:565.98px;font-size:13.08px;color:#111;transform:scaleX(0.9559);transform-origin:0 0">AKHW0...</div>
<div class="t tx80" style="left:1192.20px;top:565.98px;font-size:13.08px;color:#111;transform:scaleX(1.0613);transform-origin:0 0">927</div>
<div class="t tx81" style="left:1113.71px;top:585.98px;font-size:13.08px;color:#111;transform:scaleX(0.9559);transform-origin:0 0">AKHW0...</div>
<div class="t tx82" style="left:1192.20px;top:585.98px;font-size:13.08px;color:#111;transform:scaleX(1.0645);transform-origin:0 0">931</div>
<div class="t tx83" style="left:1113.71px;top:605.98px;font-size:13.08px;color:#111;transform:scaleX(0.9559);transform-origin:0 0">AKHW0...</div>
<div class="t tx84" style="left:1192.18px;top:605.98px;font-size:13.08px;color:#111;transform:scaleX(1.0614);transform-origin:0 0">933</div>
<div class="t tx85" style="left:1113.71px;top:625.98px;font-size:13.08px;color:#111;transform:scaleX(0.9559);transform-origin:0 0">AKHW0...</div>
<div class="t tx86" style="left:1192.18px;top:625.98px;font-size:13.08px;color:#111;transform:scaleX(1.0614);transform-origin:0 0">933</div>
<div class="t tx87" style="left:1113.71px;top:645.98px;font-size:13.08px;color:#111;transform:scaleX(0.9559);transform-origin:0 0">AKHW0...</div>
<div class="t tx88" style="left:1192.18px;top:645.98px;font-size:13.08px;color:#111;transform:scaleX(1.0676);transform-origin:0 0">935</div>
<div class="t tx89" style="left:1113.71px;top:665.98px;font-size:13.08px;color:#111;transform:scaleX(0.9559);transform-origin:0 0">AKHW0...</div>
<div class="t tx90" style="left:1192.20px;top:665.98px;font-size:13.08px;color:#111;transform:scaleX(1.0681);transform-origin:0 0">939</div>
<div class="t tx91" style="left:1113.71px;top:685.98px;font-size:13.08px;color:#111;transform:scaleX(0.9559);transform-origin:0 0">AKHW0...</div>
<div class="t tx92" style="left:1192.20px;top:685.98px;font-size:13.08px;color:#111;transform:scaleX(1.0681);transform-origin:0 0">939</div>
<div class="t tx93" style="left:1113.71px;top:705.98px;font-size:13.08px;color:#111;transform:scaleX(0.9559);transform-origin:0 0">AKHW0...</div>
<div class="t tx94" style="left:1192.20px;top:705.98px;font-size:13.08px;color:#111;transform:scaleX(1.0615);transform-origin:0 0">942</div>
<div class="t tx95" style="left:1113.71px;top:725.98px;font-size:13.08px;color:#111;transform:scaleX(0.9559);transform-origin:0 0">AKHW0...</div>
<div class="t tx96" style="left:1192.18px;top:725.98px;font-size:13.08px;color:#111;transform:scaleX(1.0614);transform-origin:0 0">943</div>
<div class="t tx97" style="left:1148.07px;top:780.32px;font-size:14.10px;color:#111;transform:scaleX(1.0199);transform-origin:0 0">280M of 2048M</div>
<div class="t" style="left:1277px;top:308.5px;font-size:14.5px;color:#111;transform-origin:0 0;transform:rotate(90deg) scaleX(0.96)">Bookmarks</div>
<div class="t" style="left:1277.2px;top:400.7px;font-size:15px;color:#111;transform-origin:0 0;transform:rotate(90deg) scaleX(0.926)">Current Genome</div>
<div class="t" style="left:1277px;top:526.7px;font-size:14.8px;color:#111;transform-origin:0 0;transform:rotate(90deg) scaleX(0.946)">Restriction Sites</div>

</body></html>
